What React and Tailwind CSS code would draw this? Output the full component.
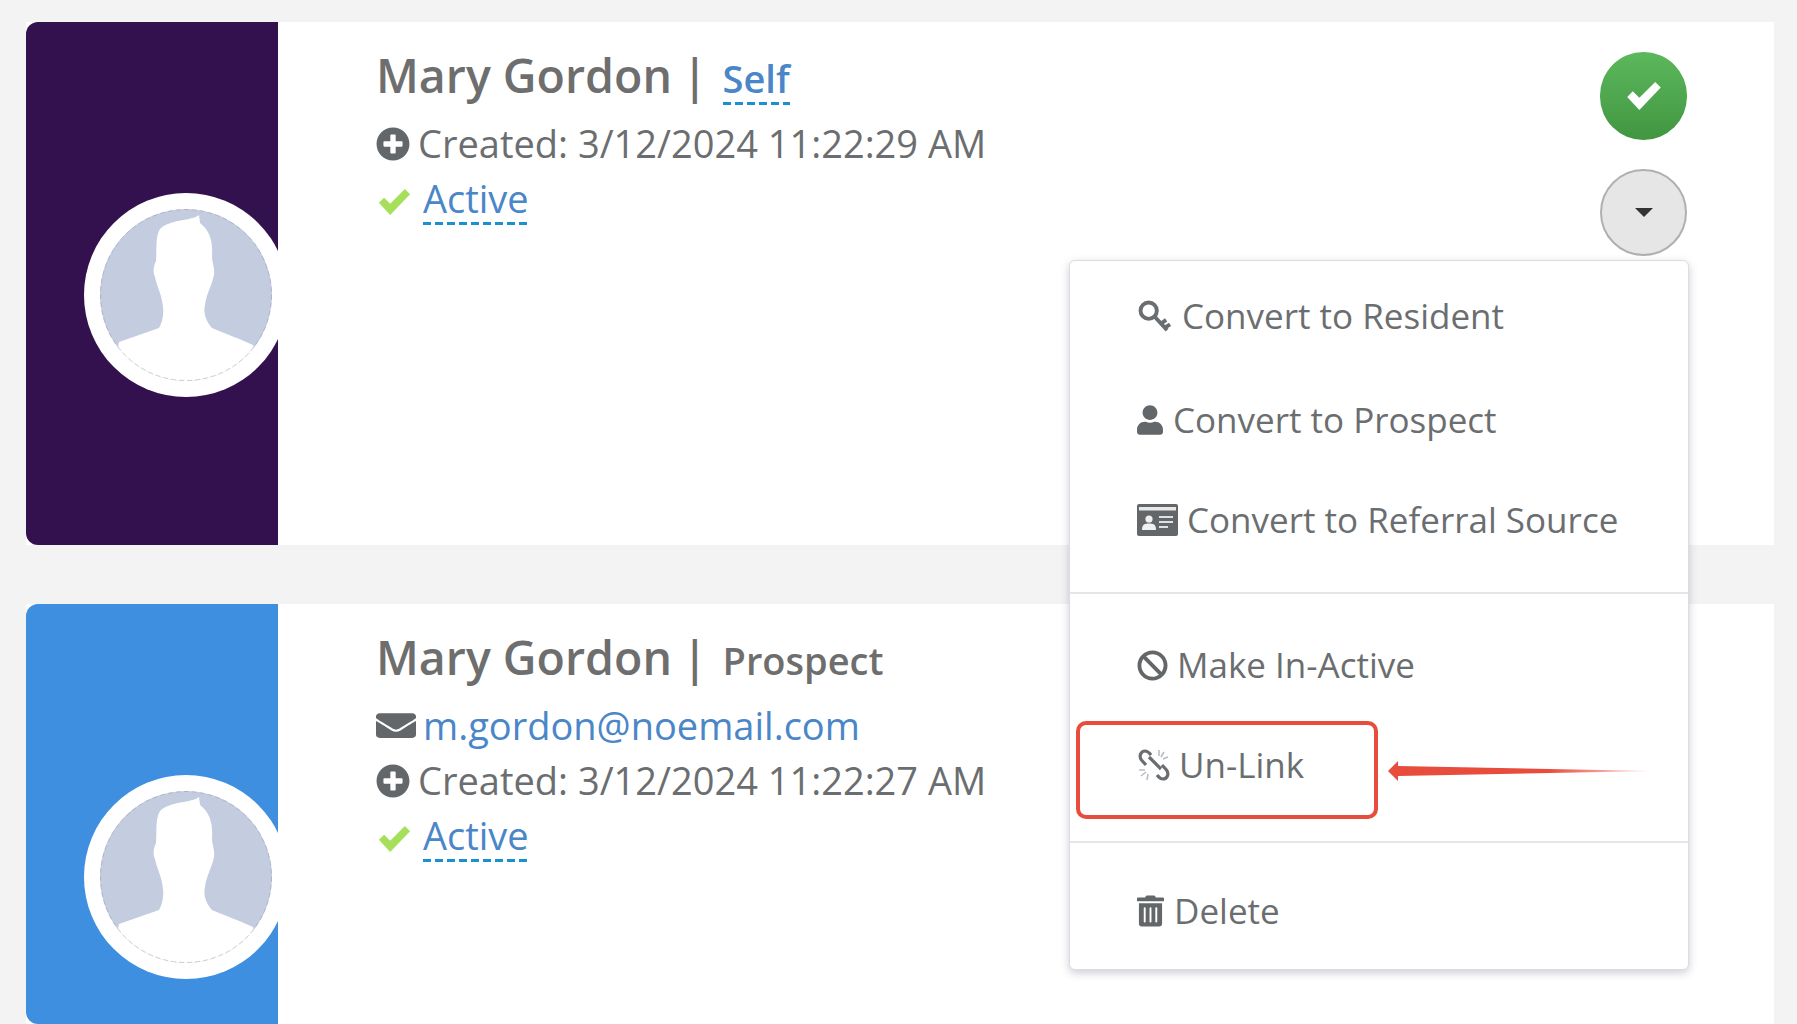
import React from "react";
import { FaPlusCircle, FaEnvelope, FaUser, FaBan, FaTrashAlt } from "react-icons/fa";

const CheckIcon = ({ className }) => (
  <svg viewBox="0 0 36 30" className={className} fill="currentColor">
    <path d="M0 16 L6 10 L13 17 L30 0 L36 6 L13 30 Z" />
  </svg>
);

const Avatar = () => (
  <div className="w-[204px] h-[204px] shrink-0 rounded-full bg-white p-[16px]">
    <svg viewBox="0 0 172 172" className="w-[172px] h-[172px] block">
      <defs>
        <clipPath id="inner"><circle cx="86" cy="86" r="86" /></clipPath>
      </defs>
      <g clipPath="url(#inner)">
        <rect width="172" height="172" fill="#c4cce0" />
        <path d="M99 6 C 92 12 70 10 60 20 C 55 28 57 42 56 52 C 53 58 53 64 55 68 C 57 78 62 86 63 98 C 64 106 62 114 59 119 L 19 133 L 10 180 L 165 180 L 153 136 C 140 130 124 124 112 119 C 106 112 103 104 105 96 C 106 86 112 76 114 66 C 115 58 112 54 112 48 C 113 32 110 22 100 14 Z" fill="#fff" />
      </g>
      <circle cx="86" cy="86" r="85.5" fill="none" stroke="#8d8fa8" strokeWidth="0.7" strokeDasharray="5 3" opacity="0.6" />
    </svg>
  </div>
);

const KeyIcon = () => (
  <svg viewBox="0 0 34 34" className="w-[35px] h-[33px] shrink-0" fill="none" stroke="#6a6e71" strokeWidth="4">
    <circle cx="11" cy="11" r="8.4" />
    <path d="M16.5 16.5 L30 31 M24 24 L29 20.5 M28.5 28 L33 25" />
  </svg>
);

const CardIcon = () => (
  <svg viewBox="0 0 41 32" className="w-[41px] h-[32px] shrink-0">
    <rect width="41" height="32" rx="2" fill="#63676a" />
    <rect x="2" y="3" width="37" height="3.5" fill="#e8e8e8" />
    <circle cx="12" cy="15" r="3.6" fill="#f0f0f0" />
    <path d="M5 26 C 5 20 8 19.5 12 19.5 C 16 19.5 19 20 19 26 Z" fill="#f0f0f0" />
    <path d="M22 13 H36 M22 18 H36 M22 23 H31" stroke="#e0e0e0" strokeWidth="2" />
  </svg>
);

const UnlinkIcon = () => (
  <svg viewBox="0 0 34 34" className="w-[34px] h-[34px] shrink-0" fill="none">
    <path d="M9 17 L4.5 12 C1.5 8 4 3 8 3 C11 3 12.5 5 14 7 M25 17 L29.5 22 C32.5 26 30 31 26 31 C23 31 21.5 29 20 27 M12 9 L24 21" stroke="#6a6e71" strokeWidth="3.2" />
    <path d="M22 2 L22 8 M27 4 L24 9 M31 9 L26 11 M2 22 L8 22 M4 28 L9 24 M10 32 L11 26" stroke="#b9bdc4" strokeWidth="1.6" />
  </svg>
);

const Link = ({ children, className = "" }) => (
  <span className={`inline-block text-[#4a86c8] pb-[7px] bg-[repeating-linear-gradient(90deg,#1a90d0_0_8px,transparent_8px_12px)] bg-no-repeat bg-bottom bg-[length:100%_3px] leading-[40px] ${className}`}>{children}</span>
);

const Row = ({ children, className = "" }) => (
  <div className={`flex items-center h-[55px] text-[38px] text-[#6b6e70] ${className}`}>{children}</div>
);

const Created = ({ time }) => (
  <Row>
    <FaPlusCircle className="w-[34px] h-[34px] text-[#63676a] shrink-0 mr-[8px]" />
    <span>Created: {time}</span>
  </Row>
);

const Active = () => (
  <Row className="relative top-[3px]">
    <CheckIcon className="w-[33px] h-[26px] text-[#a6e05a] shrink-0 ml-[2px] mr-[12px]" />
    <Link>Active</Link>
  </Row>
);

const Card = ({ color, title, email, time, buttons, height }) => (
  <div className={`flex shrink-0 bg-white ${height}`}>
    <div className={`w-[252px] shrink-0 overflow-hidden rounded-l-[12px] pl-[58px] pt-[171px] ${color}`}>
      <Avatar />
    </div>
    <div className="flex-1 flex justify-between pl-[98px] pr-[87px]">
      <div className="pt-[30px]">
        <div className="flex items-baseline h-[46px] leading-[46px] mb-[18px] font-semibold text-[#6e6e6e]">
          <span className="text-[46.5px]">Mary Gordon</span>
          <span className="text-[46.5px] ml-[10px] mr-[15px]">|</span>
          {title}
        </div>
        {email && (
          <Row>
            <FaEnvelope preserveAspectRatio="none" className="w-[40px] h-[33px] text-[#63676a] shrink-0 mr-[7px]" />
            <span className="text-[#4a86c8]">{email}</span>
          </Row>
        )}
        <Created time={time} />
        <Active />
      </div>
      {buttons}
    </div>
  </div>
);

const MenuItem = ({ icon, children, className }) => (
  <div className={`flex items-center pl-[67px] text-[#6b6e70] ${className}`}>
    {icon}
    <span>{children}</span>
  </div>
);

export default function App() {
  return (
    <div className="relative h-[1024px] w-[1797px] overflow-hidden bg-[#f3f3f3] pl-[26px] pr-[23px] pt-[22px] flex flex-col gap-[59px]" style={{ fontFamily: '"Open Sans", sans-serif' }}>
      <Card
        color="bg-[#33114f]"
        height="h-[523px]"
        time="3/12/2024 11:22:29 AM"
        title={<Link className="text-[38px]">Self</Link>}
        buttons={
          <div className="flex flex-col gap-[29px] pt-[30px]">
            <div className="w-[87px] h-[88px] rounded-full bg-gradient-to-b from-[#5cb85c] to-[#419641] flex items-center justify-center">
              <CheckIcon className="w-[34px] h-[28px] text-white" />
            </div>
            <div className="w-[87px] h-[87px] rounded-full bg-[#e6e6e6] border-2 border-[#b0b0b0] flex items-center justify-center">
              <span className="block w-0 h-0 border-x-[9px] border-x-transparent border-t-[9px] border-t-[#333]" />
            </div>
          </div>
        }
      />
      <Card
        color="bg-[#3f8fe0]"
        height="h-[420px]"
        time="3/12/2024 11:22:27 AM"
        email="m.gordon@noemail.com"
        title={<span className="text-[38px]">Prospect</span>}
      />

      <div className="absolute left-[1069px] top-[260px] w-[620px] h-[710px] bg-white rounded-[6px] border border-[#dcdde4] shadow-[0_3px_8px_rgba(60,60,90,0.25)] text-[35px] flex flex-col">
        <MenuItem className="h-[110px]" icon={<span className="mr-[10px] flex"><KeyIcon /></span>}>Convert to Resident</MenuItem>
        <MenuItem className="h-[98px]" icon={<FaUser className="w-[26px] h-[32px] text-[#63676a] shrink-0 mr-[10px]" />}>Convert to Prospect</MenuItem>
        <MenuItem className="h-[102px] mb-[21px]" icon={<span className="mr-[9px] flex"><CardIcon /></span>}>Convert to Referral Source</MenuItem>
        <div className="h-[2px] bg-[#e6e6ea]" />
        <MenuItem className="h-[143px]" icon={<FaBan className="w-[31px] h-[31px] text-[#63676a] shrink-0 mr-[9px]" />}>Make In-Active</MenuItem>
        <MenuItem className="h-[56px]" icon={<span className="mr-[8px] flex"><UnlinkIcon /></span>}>Un-Link</MenuItem>
        <div className="h-[48px]" />
        <div className="h-[2px] bg-[#e6e6ea]" />
        <MenuItem className="flex-1 pt-[10px]" icon={<FaTrashAlt className="w-[27px] h-[32px] text-[#63676a] shrink-0 mr-[10px]" />}>Delete</MenuItem>
      </div>

      <div className="absolute left-[1076px] top-[721px] w-[302px] h-[98px] rounded-[10px] border-[4px] border-[#e74c3c]" />
      <svg className="absolute left-[1388px] top-[757px]" width="266" height="28" viewBox="0 0 266 28">
        <defs>
          <linearGradient id="arrowFade" x1="0" x2="1" y1="0" y2="0">
            <stop offset="0" stopColor="#e74c3c" />
            <stop offset="0.6" stopColor="#e74c3c" />
            <stop offset="1" stopColor="#e74c3c" stopOpacity="0.1" />
          </linearGradient>
        </defs>
        <path d="M0 14 L10 4 L10 9 L266 14 L10 19 L10 24 Z" fill="url(#arrowFade)" />
      </svg>
    </div>
  );
}
